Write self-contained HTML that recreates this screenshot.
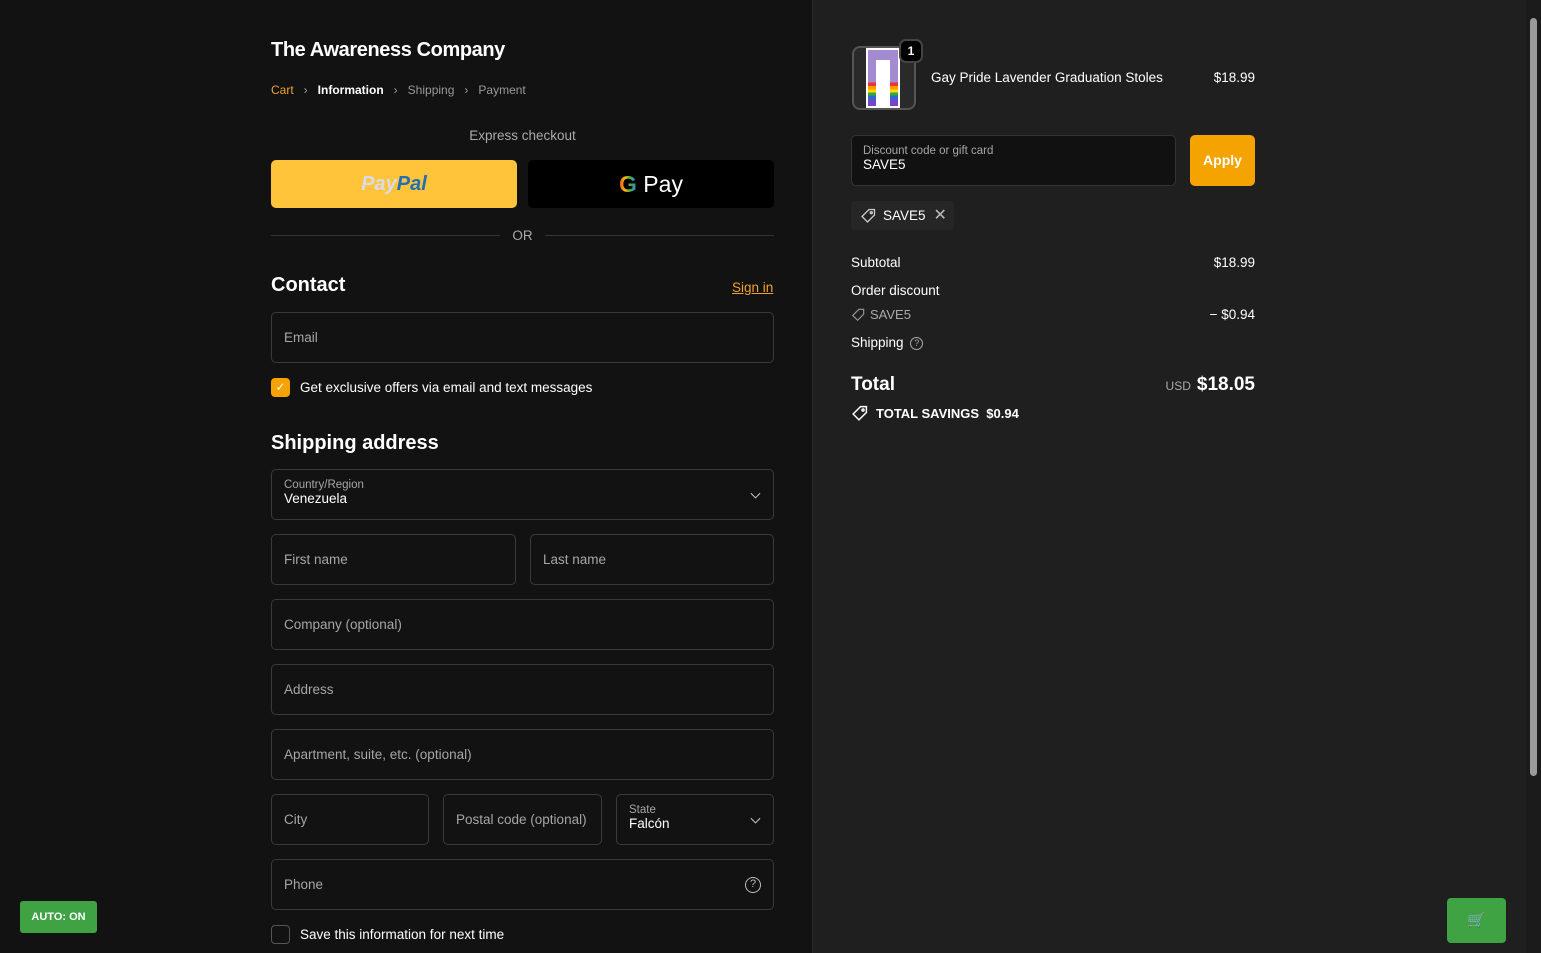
<!DOCTYPE html>
<html><head><meta charset="utf-8"><style>
*{box-sizing:border-box;margin:0;padding:0}
body{width:1541px;height:953px;overflow:hidden;background:#121212;font-family:"Liberation Sans",sans-serif;color:#fff;position:relative;font-size:13.5px}
.a{position:absolute}
.left{left:0;top:0;width:812px;height:953px;background:#121212}
.right{left:812px;top:0;width:714px;height:953px;background:#1f1f1f;border-left:1px solid #2c2c2c}
.sb{left:1526px;top:0;width:15px;height:953px;background:#1b1b1b}
.inp{position:absolute;border:1px solid #3a3a3a;border-radius:5px;background:#121212;color:#a6a6a6;font-size:13.5px;padding-left:12px;display:flex;align-items:center}
.lab{font-size:11.5px;color:#a6a6a6}
.val{font-size:13.5px;color:#fff}
.chev{position:absolute;right:14px;top:50%;width:7px;height:7px;border-right:1.5px solid #ccc;border-bottom:1.5px solid #ccc;transform:translateY(-70%) rotate(45deg)}
</style></head><body>
<div class="a left"></div>
<div class="a right"></div>
<div class="a sb"><div class="a" style="left:4px;top:18px;width:7px;height:758px;background:#9a9a9a;border-radius:4px"></div></div>

<div class="a" style="left:271px;top:39px;font-size:20px;font-weight:bold;letter-spacing:-0.4px">The Awareness Company</div>
<div class="a" style="left:271px;top:83px;font-size:12px;color:#999;white-space:nowrap">
<span style="color:#f0a030">Cart</span><span style="margin:0 10px">›</span><span style="color:#fff;font-weight:bold">Information</span><span style="margin:0 10px">›</span>Shipping<span style="margin:0 10px">›</span>Payment</div>
<div class="a" style="left:271px;width:503px;top:128px;text-align:center;font-size:13.5px;color:#aaa">Express checkout</div>
<div class="a" style="left:271px;top:160px;width:246px;height:48px;background:#ffc439;border-radius:5px;text-align:center;line-height:48px;font-size:20px;font-weight:bold;font-style:italic"><span style="color:#dadbe8">Pay</span><span style="color:#1f6fb5">Pal</span></div>
<div class="a" style="left:528px;top:160px;width:246px;height:48px;background:#000;border-radius:5px;text-align:center;line-height:48px;font-size:23px"><span style="font-weight:bold;background:linear-gradient(90deg,#ea4335,#fbbc05,#34a853,#4285f4);-webkit-background-clip:text;color:transparent">G</span> Pay</div>
<div class="a" style="left:271px;top:235px;width:229px;height:1px;background:#333"></div>
<div class="a" style="left:545px;top:235px;width:229px;height:1px;background:#333"></div>
<div class="a" style="left:500px;width:45px;top:228px;text-align:center;font-size:13.5px;color:#aaa">OR</div>
<div class="a" style="left:271px;top:274px;font-size:20px;font-weight:bold">Contact</div>
<div class="a" style="left:732px;top:280px;font-size:13.5px;color:#f0a030;text-decoration:underline">Sign in</div>
<div class="inp" style="left:271px;top:312px;width:503px;height:51px">Email</div>
<div class="a" style="left:271px;top:378px;width:19px;height:19px;background:#f5a300;border-radius:4px;color:#fff;font-size:12px;text-align:center;line-height:19px">✓</div>
<div class="a" style="left:300px;top:380px">Get exclusive offers via email and text messages</div>
<div class="a" style="left:271px;top:432px;font-size:20px;font-weight:bold">Shipping address</div>
<div class="inp" style="left:271px;top:469px;width:503px;height:51px;display:block;padding-top:9px"><div class="lab">Country/Region</div><div class="val">Venezuela</div><span class="chev"></span></div>
<div class="inp" style="left:271px;top:534px;width:245px;height:51px">First name</div>
<div class="inp" style="left:530px;top:534px;width:244px;height:51px">Last name</div>
<div class="inp" style="left:271px;top:599px;width:503px;height:51px">Company (optional)</div>
<div class="inp" style="left:271px;top:664px;width:503px;height:51px">Address</div>
<div class="inp" style="left:271px;top:729px;width:503px;height:51px">Apartment, suite, etc. (optional)</div>
<div class="inp" style="left:271px;top:794px;width:158px;height:51px">City</div>
<div class="inp" style="left:443px;top:794px;width:159px;height:51px">Postal code (optional)</div>
<div class="inp" style="left:616px;top:794px;width:158px;height:51px;display:block;padding-top:9px"><div class="lab">State</div><div class="val">Falcón</div><span class="chev"></span></div>
<div class="inp" style="left:271px;top:859px;width:503px;height:51px">Phone<span style="position:absolute;right:12px;width:16px;height:16px;border:1.5px solid #bbb;border-radius:50%;font-size:11px;color:#bbb;text-align:center;line-height:13px">?</span></div>
<div class="a" style="left:271px;top:925px;width:19px;height:19px;border:1px solid #555;border-radius:4px"></div>
<div class="a" style="left:300px;top:927px">Save this information for next time</div>
<div class="a" style="left:20px;top:901px;width:77px;height:32px;background:#3fa243;border-radius:3px;font-size:11px;font-weight:bold;text-align:center;line-height:32px">AUTO: ON</div>

<div class="a" style="left:852px;top:46px;width:64px;height:64px;border:2px solid #555;border-radius:8px;background:#2a2a2a;overflow:hidden">
<div class="a" style="left:12px;top:0;width:34px;height:60px;background:#fff"></div>
<div class="a" style="left:14px;top:6px;width:8px;height:52px;background:linear-gradient(#a48ad0 0 55%,#e33 55% 62%,#f90 62% 68%,#fd0 68% 74%,#3a3 74% 80%,#36c 80% 88%,#74c 88%)"></div>
<div class="a" style="left:36px;top:6px;width:8px;height:52px;background:linear-gradient(#a48ad0 0 55%,#e33 55% 62%,#f90 62% 68%,#fd0 68% 74%,#3a3 74% 80%,#36c 80% 88%,#74c 88%)"></div>
<div class="a" style="left:14px;top:2px;width:30px;height:10px;background:#a48ad0"></div></div>
<div class="a" style="left:899px;top:39px;width:24px;height:24px;background:#000;border:2px solid #444;border-radius:7px;font-size:12px;font-weight:bold;text-align:center;line-height:20px">1</div>
<div class="a" style="left:931px;top:70px">Gay Pride Lavender Graduation Stoles</div>
<div class="a" style="left:1180px;width:75px;text-align:right;top:70px">$18.99</div>
<div class="a" style="left:851px;top:135px;width:325px;height:51px;background:#111;border:1px solid #333;border-radius:5px;padding:9px 11px"><div class="lab">Discount code or gift card</div><div class="val">SAVE5</div></div>
<div class="a" style="left:1190px;top:135px;width:65px;height:51px;background:#f5a300;border-radius:5px;text-align:center;line-height:51px;font-size:14px;font-weight:bold">Apply</div>
<div class="a" style="left:851px;top:201px;width:103px;height:29px;background:#262626;border-radius:4px;line-height:29px;padding-left:32px">SAVE5<span style="margin-left:8px;color:#bbb;font-size:16px">✕</span>
<svg class="a" style="left:9px;top:7px" width="16" height="16" viewBox="0 0 16 16" fill="none" stroke="#ccc" stroke-width="1.3"><path d="M9 1.5h5.5V7L7.5 14 2 8.5z"/><circle cx="11.3" cy="4.7" r="1"/></svg></div>
<div class="a" style="left:851px;top:255px">Subtotal</div>
<div class="a" style="left:1180px;width:75px;text-align:right;top:255px">$18.99</div>
<div class="a" style="left:851px;top:283px">Order discount</div>
<svg class="a" style="left:851px;top:308px" width="14" height="14" viewBox="0 0 16 16" fill="none" stroke="#999" stroke-width="1.3"><path d="M9 1.5h5.5V7L7.5 14 2 8.5z"/></svg>
<div class="a" style="left:870px;top:307px;font-size:13px;color:#aaa">SAVE5</div>
<div class="a" style="left:1180px;width:75px;text-align:right;top:307px">− $0.94</div>
<div class="a" style="left:851px;top:335px">Shipping <span style="display:inline-block;width:13px;height:13px;border:1.3px solid #aaa;border-radius:50%;font-size:9px;color:#aaa;text-align:center;line-height:11px;margin-left:3px;vertical-align:middle">?</span></div>
<div class="a" style="left:851px;top:374px;font-size:19px;font-weight:bold">Total</div>
<div class="a" style="left:1100px;width:155px;text-align:right;top:374px;font-size:19px;font-weight:bold"><span style="font-size:12px;color:#aaa;font-weight:normal;margin-right:6px">USD</span>$18.05</div>
<svg class="a" style="left:851px;top:405px" width="17" height="17" viewBox="0 0 16 16" fill="none" stroke="#fff" stroke-width="1.4"><path d="M9 1.5h5.5V7L7.5 14 2 8.5z"/><circle cx="11.3" cy="4.7" r="1"/></svg>
<div class="a" style="left:876px;top:406px;font-size:13px;font-weight:bold">TOTAL SAVINGS&nbsp; $0.94</div>
<div class="a" style="left:1447px;top:898px;width:59px;height:45px;background:#3fa243;border-radius:4px;text-align:center;line-height:45px;font-size:15px">🛒</div>
</body></html>
